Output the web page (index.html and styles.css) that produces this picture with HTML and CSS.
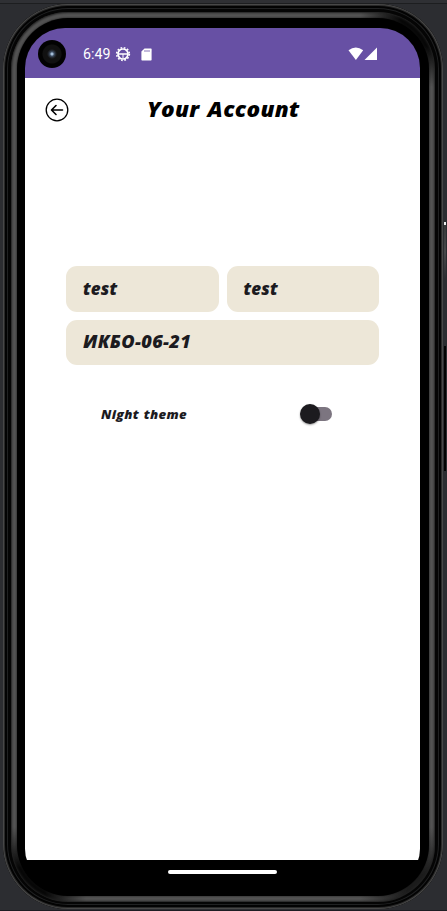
FILE: index.html
```html
<!DOCTYPE html>
<html lang="en">
<head>
<meta charset="utf-8">
<title>Your Account</title>
<link rel="stylesheet" href="styles.css">
</head>
<body>
<div class="phone">
  <i class="glint"></i><i class="side-button"></i>
  <div class="rim">
    <div class="bezel">
      <div class="screen">
        <header class="status">
          <span class="camera"></span>
          <span class="clock">6:49</span>
          <svg class="gear" width="16" height="16" viewBox="0 0 16 16" fill="none" stroke="#fff"><circle cx="8" cy="8" r="5" stroke-width="1.700"/><circle cx="8" cy="8" r="6.300" stroke-width="1.700" stroke-dasharray="1.7 1.6"/><path d="M3 8h10" stroke-width="1.500"/><path d="M8 8v4.500" stroke-width="1"/></svg>
          <svg class="card" width="11" height="13" viewBox="0 0 11 13"><path d="M3.500.5H10q.6 0 .6.6v10.700q0 .7-.7.7H1.100q-.7 0-.7-.7V3.600z" fill="#fff"/><path d="M4 2v2M6 2v2M8 2v2" stroke="#6750a4" stroke-width=".8"/></svg>
          <svg class="signal" width="30" height="14" viewBox="0 0 30 14" fill="#fff"><path d="M.5 3.200Q7.800-2.200 15.200 3.200L7.900 13z"/><path d="M16.500 13L29 .5V13z"/></svg>
        </header>
        <main>
          <div class="title-row">
            <svg width="24" height="24" viewBox="0 0 24 24" fill="none" stroke="#000" stroke-linecap="round" stroke-linejoin="round"><circle cx="12" cy="12" r="10.800" stroke-width="1.300"/><path d="M17.500 12H6.800M11 7.500L6.500 12l4.500 4.500" stroke-width="1.600"/></svg>
            <h1>Your Account</h1>
          </div>
          <div class="fields">
            <div class="field">test</div>
            <div class="field">test</div>
            <div class="field wide"><span>ИКБО-06-21</span></div>
          </div>
          <div class="theme"><span>Night theme</span><span class="switch"></span></div>
        </main>
        <footer class="nav"><span></span></footer>
      </div>
    </div>
  </div>
</div>
</body>
</html>
```
FILE: styles.css
```css
* { box-sizing: border-box; }
body {
  margin: 0; width: 447px; height: 911px; padding: 4px 4px 2px 3px; overflow: hidden;
  background: #2c2d31;
  box-shadow: inset 0 3px #2f3034, inset 0 4px #1d1e20, inset 0 -1px #1d1d22;
  font-family: "Open Sans", "Noto Sans", sans-serif;
}
.phone {
  position: relative; height: 905px; padding: 8px 8px 7px;
  border-radius: 65px; background: #050505;
  box-shadow: inset 0 0 0 1px #484848, inset 0 0 0 2px #292929, inset 0 0 0 4px #030303, inset 0 0 0 5px #202122;
}
.glint { position: absolute; right: -3px; top: 218px; width: 2px; height: 57px; background: linear-gradient(#eee 3px, #38393a 3px, #47484a 30px, #2c2d31); }
.side-button { position: absolute; right: -3px; top: 342px; width: 2px; height: 125px; background: #030303; }
.rim {
  height: 890px; padding: 6px; border-radius: 57px;
  background:
    radial-gradient(circle at 100% 0, #080808 35px, transparent 75px),
    radial-gradient(circle at 0 100%, #080808 35px, transparent 75px),
    radial-gradient(circle at 100% 100%, #1c1c1c 30px, transparent 75px),
    #535353;
  box-shadow: inset 0 0 2px 1px #222;
}
.bezel {
  height: 878px; padding: 10px 9px 0 8px; border-radius: 51px;
  background: #000; box-shadow: 0 0 2px #111;
}
.screen { height: 855px; width: 395px; border-radius: 40px 40px 34px 34px; overflow: hidden; background: #000; }
.status { display: flex; align-items: center; height: 50px; background: #6750a4; padding-left: 13px; }
.camera {
  width: 28px; height: 28px; border-radius: 50%; margin-top: 1px;
  background: radial-gradient(circle, #a4bdd8 0 1px, #44556b 2px, #252a33 3.5px, #111 5px 9px, #020202 10px);
}
.clock { width: 28px; margin: 2px 0 0 17px; font: 14.2px/20px Roboto, sans-serif; color: #fff; }
.gear { margin: 2px 0 0 4px; }
.card { margin: 2px 0 0 10px; }
.signal { margin: 2px 0 0 196px; }
main { height: 782px; padding: 20px 41px 0; background: #fff; }
.title-row { display: flex; height: 24px; margin-left: -21px; align-items: center; }
h1 { margin: -3px 0 0 78px; font-size: 21.500px; line-height: 30px; font-style: italic; font-weight: 800; white-space: nowrap; letter-spacing: .3px; word-spacing: 2px; color: #000; transform: scaleX(1.047); transform-origin: left; }
.fields { display: grid; grid-template-columns: 1fr 1fr; gap: 8px; margin-top: 144px; }
.field {
  height: 45.500px; border-radius: 11px; padding-left: 17px; background: #ede7d8;
  font-size: 17px; line-height: 45px; font-style: italic; font-weight: 800; letter-spacing: .1px; color: #1c1b1f;
}
.wide { grid-column: 1 / 3; line-height: 44px; }
.wide span { display: inline-block; letter-spacing: .3px; transform: scaleX(1.07); transform-origin: left; }
.theme { display: flex; justify-content: space-between; align-items: center; height: 20px; margin: 39px 47px 0 35px; }
.theme span:first-child { font-size: 13px; font-style: italic; font-weight: 800; letter-spacing: .3px; word-spacing: 1px; color: #1c1b1f; margin-top: -1px; transform: scaleX(1.015); transform-origin: left; }
.switch { position: relative; width: 29px; height: 14px; border-radius: 7px; background: #7c7580; }
.switch::before {
  content: ""; position: absolute; left: -3px; top: -3px; width: 20px; height: 20px;
  border-radius: 50%; background: #1c1b1f; box-shadow: 0 1px 2px #0006;
}
.nav { display: flex; justify-content: center; height: 23px; background: #000; padding-top: 10px; }
.nav span { width: 109px; height: 4px; border-radius: 2px; background: #fff; }
```
